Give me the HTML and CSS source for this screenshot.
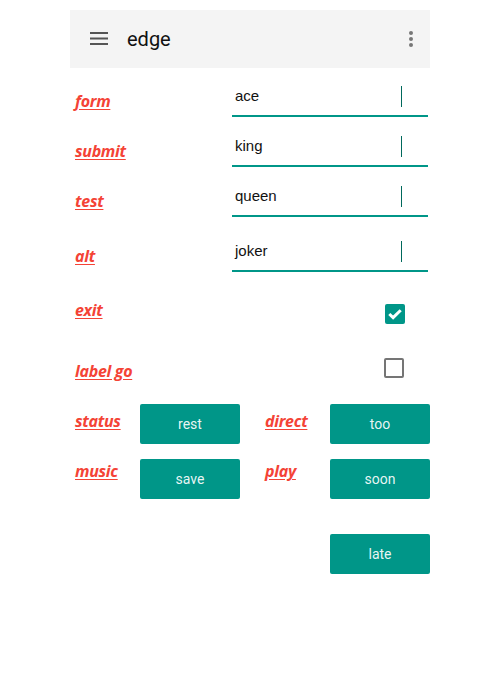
FILE: index.html
```html
<!DOCTYPE html>
<html>
<head>
<meta charset="utf-8">
<link rel="stylesheet" href="styles.css">
</head>
<body>
<div class="app">
  <header class="bar">
    <svg class="icon" width="24" height="24" viewBox="0 0 24 24"><path d="M3 6h18M3 11.5h18M3 17h18" stroke="#555" stroke-width="2" fill="none"/></svg>
    <span class="title">edge</span>
    <svg class="icon" width="24" height="24" viewBox="0 0 24 24"><circle cx="12" cy="6" r="2" fill="#777"/><circle cx="12" cy="12" r="2" fill="#777"/><circle cx="12" cy="18" r="2" fill="#777"/></svg>
  </header>

  <div class="row">
    <span class="lbl">form</span>
    <div class="field"><span class="val">ace</span><span class="caret"></span></div>
  </div>
  <div class="row">
    <span class="lbl">submit</span>
    <div class="field"><span class="val">king</span><span class="caret"></span></div>
  </div>
  <div class="row">
    <span class="lbl">test</span>
    <div class="field"><span class="val">queen</span><span class="caret"></span></div>
  </div>
  <div class="row row-alt">
    <span class="lbl">alt</span>
    <div class="field"><span class="val">joker</span><span class="caret"></span></div>
  </div>

  <div class="row row-exit">
    <span class="lbl">exit</span>
    <span class="cb cb-on"><svg width="20" height="20" viewBox="0 0 20 20"><path d="M4.3 10l3.8 3.6 7.6-7.4" stroke="#fff" stroke-width="3" fill="none"/></svg></span>
  </div>
  <div class="row row-go">
    <span class="lbl">label go</span>
    <span class="cb cb-off"></span>
  </div>

  <div class="btns">
    <span class="lbl l1">status</span>
    <span class="btn">rest</span>
    <span class="lbl l1 lr">direct</span>
    <span class="btn">too</span>
    <span class="lbl l2">music</span>
    <span class="btn">save</span>
    <span class="lbl l2 lr">play</span>
    <span class="btn">soon</span>
  </div>
  <div class="late-row"><span class="btn">late</span></div>
</div>
</body>
</html>
```
FILE: styles.css
```css
html, body { margin: 0; padding: 0; background: #fff; }
.app { width: 360px; margin-left: 70px; padding-top: 10px; }
.bar {
  height: 58px; background: #f4f4f4;
  display: flex; align-items: center;
  padding: 0 7px 0 17px; box-sizing: border-box;
}
.icon { display: block; flex: none; }
.title {
  flex: 1; margin-left: 16px;
  font: 400 20px/24px Roboto, sans-serif; color: #111;
}
.row {
  height: 50px; display: flex;
  justify-content: space-between; align-items: flex-start;
}
.lbl {
  margin-top: 23px; margin-left: 5px;
  font: italic 700 16px/20px "Open Sans", sans-serif;
  letter-spacing: -0.3px;
  color: #f44336; text-decoration: underline;
  text-underline-offset: 2px;
}
.field {
  width: 196px; height: 29px; margin-top: 18px; margin-right: 2px;
  border-bottom: 2px solid #009688;
  display: flex; align-items: flex-start;
}
.val {
  padding-left: 3px;
  font: 400 15px/20px "Liberation Sans", Arial, sans-serif; color: #111;
}
.caret {
  width: 1px; height: 21px; margin-left: auto; margin-right: 26px;
  background: #00695c;
}
.row-alt { margin-top: 5px; }
.row-exit { height: 62px; }
.row-exit .lbl { margin-top: 27px; }
.row-exit .cb { margin-top: 31px; margin-right: 25px; }
.row-go { height: 60px; }
.row-go .lbl { margin-top: 26px; }
.row-go .cb { margin-top: 23px; margin-right: 26px; }
.cb { width: 20px; height: 20px; border-radius: 2px; box-sizing: border-box; display: block; }
.cb svg { display: block; }
.cb-on { background: #009688; }
.cb-off { border: 2px solid #757575; }

.btns {
  margin-top: 9px;
  display: grid;
  grid-template-columns: 70px 100px 90px 100px;
  grid-auto-rows: 40px; row-gap: 15px;
}
.btns .lbl { margin-left: 5px; align-self: start; }
.btns .lr { margin-left: 25px; }
.btns .l1 { margin-top: 7px; }
.btns .l2 { margin-top: 2px; }
.btn {
  width: 100px; height: 40px; border-radius: 2px;
  background: #009688; color: rgba(255,255,255,0.92);
  display: flex; align-items: center; justify-content: center;
  font: 400 14px/20px Roboto, sans-serif;
}
.late-row { margin-top: 35px; display: flex; justify-content: flex-end; }
```
